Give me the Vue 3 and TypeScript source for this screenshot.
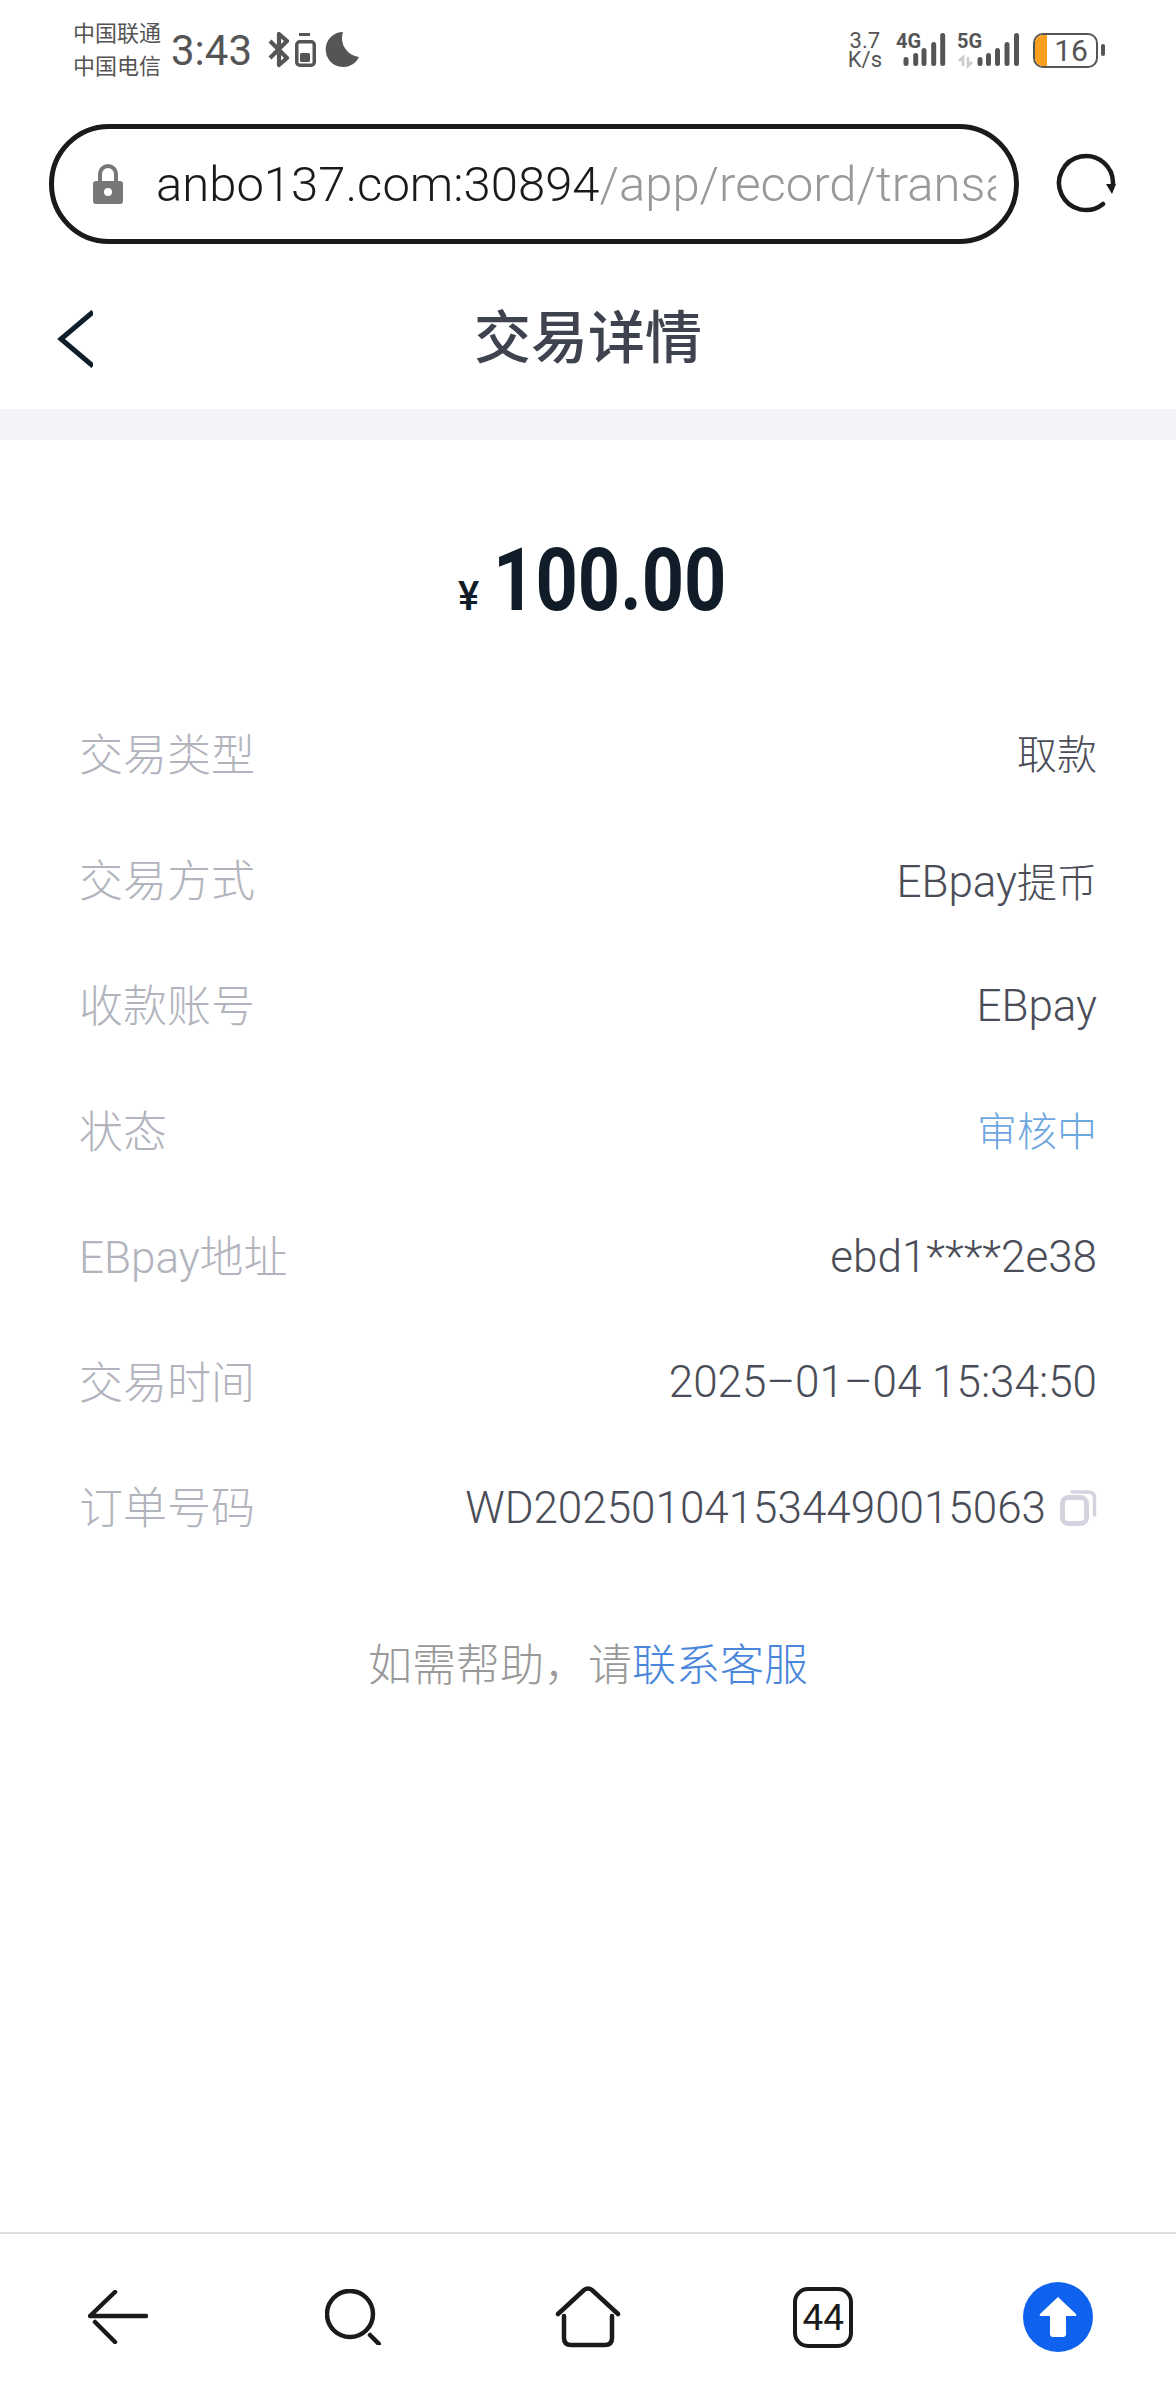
<template>
  <div class="page">
    <div class="status">
      <div class="carriers">
        <span>中国联通</span>
        <span>中国电信</span>
      </div>
      <span class="time">3:43</span>
      <svg class="st-icons" width="92" height="36" viewBox="0 0 92 36">
        <g fill="none" stroke="#555" stroke-width="4.2" stroke-linejoin="round">
          <path d="M2 9 L19 26 L11 33 V21 M2 26 L19 9 L11 2 V14" />
          <rect x="28.75" y="9.75" width="17.5" height="23.5" rx="3" stroke-width="3.5" />
          <path d="M31 2.5 H42" stroke-width="3" />
        </g>
        <rect x="32" y="21" width="10" height="9" rx="1.5" fill="#555" />
        <path d="M75 0 A17.5 17.5 0 1 0 91 25 A19 19 0 0 1 75 0 Z" fill="#555" />
      </svg>
      <div class="spacer"></div>
      <div class="speed">
        <span>3.7</span>
        <span>K/s</span>
      </div>
      <svg class="signal" width="51" height="44" viewBox="0 -4 51 44">
        <text x="0" y="16" class="net">4G</text>
        <g fill="#555">
          <rect x="7.5" y="25" width="5" height="9" rx="2.5" />
          <rect x="17.2" y="21" width="5" height="13" rx="2.5" />
          <rect x="25.5" y="16" width="5" height="18" rx="2.5" />
          <rect x="35.2" y="10" width="5" height="24" rx="2.5" />
          <rect x="44.2" y="1" width="5" height="33" rx="2.5" />
        </g>
      </svg>
      <svg class="signal second" width="62" height="44" viewBox="0 -4 62 44">
        <text x="0" y="16" class="net">5G</text>
        <path d="M6 34 V25 L2 29 M11 25 V34 L15 30" fill="none" stroke="#ccc" stroke-width="2.5" />
        <g fill="#555">
          <rect x="20.5" y="25" width="5" height="9" rx="2.5" />
          <rect x="29" y="21" width="5" height="13" rx="2.5" />
          <rect x="38" y="16" width="5" height="18" rx="2.5" />
          <rect x="47.5" y="10" width="5" height="24" rx="2.5" />
          <rect x="57" y="1" width="5" height="33" rx="2.5" />
        </g>
      </svg>
      <div class="battery">
        <div class="battery-fill"></div>
        <span>16</span>
      </div>
      <div class="battery-tip"></div>
    </div>

    <div class="browser">
      <div class="url">
        <svg width="30" height="40" viewBox="0 0 30 40">
          <path d="M7 20 V10 A8 8 0 0 1 23 10 V20" fill="none" stroke="#777" stroke-width="4" />
          <rect x="0" y="17" width="30" height="23" rx="3" fill="#777" />
          <circle cx="15" cy="28" r="4" fill="#fff" />
        </svg>
        <div class="url-text"><span class="host">anbo137.com:30894</span>/app/record/transaction</div>
      </div>
      <svg class="refresh" width="64" height="64" viewBox="0 0 64 64">
        <path d="M49 52 A27 27 0 1 1 59 32" fill="none" stroke="#1a1a1a" stroke-width="4.5" stroke-linecap="round" />
        <path d="M52 32 H62 L58 42 Z" fill="#1a1a1a" />
      </svg>
    </div>

    <header class="head">
      <svg class="head-back" width="36" height="58" viewBox="0 0 36 58">
        <path d="M36 2 L4 29 L36 56" fill="none" stroke="#0e1e2b" stroke-width="5" />
      </svg>
      <h1>交易详情</h1>
    </header>
    <div class="band"></div>

    <div class="amount">
      <span class="yen">¥</span>
      <span class="num"><span class="num-inner">100.00</span></span>
    </div>

    <div class="rows">
      <div v-for="row in rows" :key="row.label" class="row">
        <span class="label">{{ row.label }}</span>
        <span class="value" :class="{ pending: row.pending, solo: !row.value }">
          <span>{{ row.value }}<span v-if="row.cjk" class="cjk">{{ row.cjk }}</span></span>
          <svg v-if="row.copy" class="copy" width="37" height="37" viewBox="0 0 37 37">
            <path d="M12 3 H28 Q34.5 3 34.5 9 V26" fill="none" stroke="#d3d4e0" stroke-width="3.5" stroke-linecap="round" />
            <rect x="2.5" y="8.5" width="24" height="26" rx="6" fill="none" stroke="#d3d4e0" stroke-width="5" />
          </svg>
        </span>
      </div>
    </div>

    <p class="help">如需帮助，请<span class="link">联系客服</span></p>

    <div class="spacer"></div>

    <nav class="nav">
      <svg width="60" height="54" viewBox="0 0 60 54">
        <path d="M27 2 L2 26 H58 M7 32 L27 52" fill="none" stroke="#1a1a1a" stroke-width="4.5" stroke-linecap="round" stroke-linejoin="round" />
      </svg>
      <svg width="56" height="56" viewBox="0 0 56 56">
        <circle cx="25" cy="25" r="23" fill="none" stroke="#1a1a1a" stroke-width="4.5" />
        <path d="M45 46 L54 55" fill="none" stroke="#1a1a1a" stroke-width="4.5" stroke-linecap="round" />
      </svg>
      <svg width="66" height="62" viewBox="0 0 66 62">
        <path d="M3 28 L29 4 Q33 1 37 4 L63 28" fill="none" stroke="#1a1a1a" stroke-width="4.5" stroke-linecap="round" />
        <path d="M9 30 V52 Q9 59 16 59 H50 Q57 59 57 52 V30" fill="none" stroke="#1a1a1a" stroke-width="4.5" stroke-linecap="round" />
      </svg>
      <div class="tabs">44</div>
      <svg width="70" height="70" viewBox="0 0 70 70">
        <circle cx="35" cy="35" r="35" fill="#0f62ee" />
        <path d="M35 15 L53 32 Q54 34 52 34 H43 V52 Q43 55 40 55 H30 Q27 55 27 52 V34 H18 Q16 34 17 32 Z" fill="#fff" />
      </svg>
    </nav>
  </div>
</template>

<script setup lang="ts">
interface IRow {
  label: string;
  value: string;
  cjk?: string;
  pending?: boolean;
  copy?: boolean;
}

const rows: IRow[] = [
  { label: '交易类型', value: '', cjk: '取款' },
  { label: '交易方式', value: 'EBpay', cjk: '提币' },
  { label: '收款账号', value: 'EBpay' },
  { label: '状态', value: '', cjk: '审核中', pending: true },
  { label: 'EBpay地址', value: 'ebd1****2e38' },
  { label: '交易时间', value: '2025–01–04 15:34:50' },
  { label: '订单号码', value: 'WD202501041534490015063', copy: true },
];
</script>

<style>
body {
  background: #fff;
}
</style>

<style scoped>
.page {
  display: flex;
  flex-direction: column;
  width: 1176px;
  height: 2400px;
  background: #fff;
  font-family: Roboto, 'Noto Sans CJK SC', sans-serif;
  overflow: hidden;
}

.spacer {
  flex: 1;
}

.status {
  display: flex;
  align-items: center;
  height: 100px;
  padding: 0 71px 0 73px;
  color: #555;
}

.carriers {
  display: flex;
  flex-direction: column;
  font-size: 22px;
  line-height: 33px;
}

.time {
  margin-left: 10px;
  font-size: 42px;
}

.st-icons {
  margin-left: 16px;
}

.speed {
  display: flex;
  flex-direction: column;
  align-items: center;
  font-size: 22px;
  line-height: 19px;
}

.signal {
  margin-left: 14px;
}

.signal.second {
  margin-left: 10px;
}

.net {
  font-family: Roboto, sans-serif;
  font-size: 20px;
  font-weight: 700;
  fill: #555;
}

.battery {
  position: relative;
  display: flex;
  align-items: center;
  justify-content: center;
  box-sizing: border-box;
  width: 65px;
  height: 35px;
  margin-left: 14px;
  padding-left: 11px;
  border: 2.5px solid #555;
  border-radius: 10px;
  font-size: 30px;
  overflow: hidden;
}

.battery-fill {
  position: absolute;
  left: 0;
  top: 0;
  bottom: 0;
  width: 12px;
  background: #fa9e1c;
}

.battery span {
  position: relative;
}

.battery-tip {
  width: 4px;
  height: 12px;
  margin-left: 3px;
  border-radius: 2px;
  background: #555;
}

.browser {
  display: flex;
  align-items: center;
  height: 120px;
  margin-top: 24px;
  padding-left: 49px;
}

.url {
  display: flex;
  align-items: center;
  box-sizing: border-box;
  width: 970px;
  height: 120px;
  padding: 0 18px 0 39px;
  border: 5px solid #1a1a1a;
  border-radius: 60px;
}

.url-text {
  flex: 1;
  margin-left: 33px;
  overflow: hidden;
  font-size: 49px;
  font-weight: 300;
  white-space: nowrap;
  color: #999;
}

.host {
  color: #1a1a1a;
}

.refresh {
  margin-left: 35px;
}

.head {
  position: relative;
  display: flex;
  align-items: center;
  justify-content: center;
  box-sizing: border-box;
  height: 165px;
  padding-top: 12px;
}

.head-back {
  position: absolute;
  left: 57px;
  top: 66px;
}

h1 {
  margin: 0;
  font-size: 57px;
  font-weight: 500;
  color: #3f434f;
}

.band {
  height: 31px;
  background: #f3f3f8;
}

.amount {
  display: flex;
  align-items: baseline;
  justify-content: center;
  height: 278px;
  padding-top: 88px;
  padding-left: 2px;
  box-sizing: border-box;
  color: #101c28;
}

.yen {
  margin-right: 14px;
  font-size: 40px;
  font-weight: 500;
}

.num {
  display: inline-block;
  width: 227px;
  font-size: 88px;
  line-height: 103px;
  font-weight: 700;
}

.num-inner {
  display: inline-block;
  transform: scaleX(0.84);
  transform-origin: left;
}

.rows {
  display: flex;
  flex-direction: column;
  margin-top: -26px;
  padding: 0 79px;
}

.row {
  display: flex;
  align-items: center;
  justify-content: space-between;
  height: 125.5px;
  font-size: 44px;
  font-weight: 300;
}

.label {
  margin-bottom: 5px;
  color: #b2b4bd;
}

.value {
  display: flex;
  align-items: center;
  gap: 14px;
  color: #4a4d57;
}

.solo {
  margin-bottom: 5px;
}

.cjk {
  font-size: 40px;
}

.pending {
  color: #6fa8e0;
}

.help {
  margin: 63px 0 0;
  font-size: 44px;
  font-weight: 300;
  line-height: 64px;
  text-align: center;
  color: #999;
}

.link {
  color: #4a86db;
}

.nav {
  display: grid;
  grid-template-columns: repeat(5, 1fr);
  align-items: center;
  justify-items: center;
  box-sizing: border-box;
  height: 168px;
  border-top: 2px solid #ddd;
}

.tabs {
  display: flex;
  align-items: center;
  justify-content: center;
  box-sizing: border-box;
  width: 60px;
  height: 61px;
  border: 4.5px solid #1a1a1a;
  border-radius: 15px;
  font-size: 37px;
  color: #1a1a1a;
}
</style>
